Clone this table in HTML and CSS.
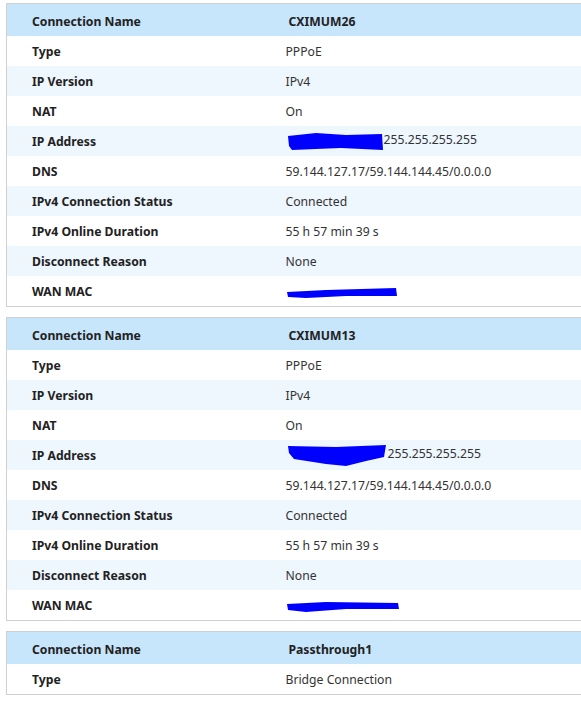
FILE: index.html
```html
<!DOCTYPE html>
<html>
<head>
<meta charset="utf-8">
<link rel="stylesheet" href="styles.css">
</head>
<body>
<div class="page">
  <table class="conn">
    <thead><tr><th class="lbl">Connection Name</th><th class="val">CXIMUM26</th></tr></thead>
    <tbody>
      <tr><td class="lbl">Type</td><td class="val">PPPoE</td></tr>
      <tr><td class="lbl">IP Version</td><td class="val">IPv4</td></tr>
      <tr><td class="lbl">NAT</td><td class="val">On</td></tr>
      <tr><td class="lbl">IP Address</td><td class="val"><svg class="redact" width="98" height="22" viewBox="0 0 98 22"><path d="M2 6 L30 3 L60 5 L96 4 L97 20 L55 18 L30 19 L6 20 L3 16 Z" fill="#0000ff"/></svg>255.255.255.255</td></tr>
      <tr><td class="lbl">DNS</td><td class="val">59.144.127.17/59.144.144.45/0.0.0.0</td></tr>
      <tr><td class="lbl">IPv4 Connection Status</td><td class="val">Connected</td></tr>
      <tr><td class="lbl">IPv4 Online Duration</td><td class="val">55 h 57 min 39 s</td></tr>
      <tr><td class="lbl">Disconnect Reason</td><td class="val">None</td></tr>
      <tr><td class="lbl">WAN MAC</td><td class="val"><svg class="redact" width="112" height="14" viewBox="0 0 112 14"><path d="M1 7 L40 5 L110 3 L111 11 L60 11 L20 13 L2 12 Z" fill="#0000ff"/></svg></td></tr>
    </tbody>
  </table>

  <table class="conn">
    <thead><tr><th class="lbl">Connection Name</th><th class="val">CXIMUM13</th></tr></thead>
    <tbody>
      <tr><td class="lbl">Type</td><td class="val">PPPoE</td></tr>
      <tr><td class="lbl">IP Version</td><td class="val">IPv4</td></tr>
      <tr><td class="lbl">NAT</td><td class="val">On</td></tr>
      <tr><td class="lbl">IP Address</td><td class="val"><svg class="redact" width="102" height="24" viewBox="0 0 102 24"><path d="M2 3 L50 4 L100 2 L98 14 L80 18 L60 23 L40 21 L8 16 L3 10 Z" fill="#0000ff"/></svg>255.255.255.255</td></tr>
      <tr><td class="lbl">DNS</td><td class="val">59.144.127.17/59.144.144.45/0.0.0.0</td></tr>
      <tr><td class="lbl">IPv4 Connection Status</td><td class="val">Connected</td></tr>
      <tr><td class="lbl">IPv4 Online Duration</td><td class="val">55 h 57 min 39 s</td></tr>
      <tr><td class="lbl">Disconnect Reason</td><td class="val">None</td></tr>
      <tr><td class="lbl">WAN MAC</td><td class="val"><svg class="redact" width="114" height="14" viewBox="0 0 114 14"><path d="M1 5 L40 3 L112 4 L113 10 L60 10 L20 13 L2 11 Z" fill="#0000ff"/></svg></td></tr>
    </tbody>
  </table>

  <table class="conn">
    <thead><tr><th class="lbl">Connection Name</th><th class="val">Passthrough1</th></tr></thead>
    <tbody>
      <tr><td class="lbl">Type</td><td class="val">Bridge Connection</td></tr>
    </tbody>
  </table>
</div>
</body>
</html>
```
FILE: styles.css
```css
html {
  overflow: hidden;
}
body {
  margin: 0;
  background: #ffffff;
  font-family: "Noto Sans", "Open Sans", sans-serif;
  font-size: 12.2px;
  color: #333333;
}
.page {
  padding: 3px 0 0 6px;
}
.conn {
  width: 575px;
  border-collapse: collapse;
  border: 1px solid #d0d0d0;
  border-right: 0;
  margin-bottom: 10px;
  table-layout: fixed;
}
.conn th,
.conn td {
  height: 30px;
  padding: 0;
  text-align: left;
  vertical-align: middle;
  white-space: nowrap;
}
.conn thead tr {
  background: #c7e5fb;
}
.conn th {
  height: 30px;
  padding-top: 2px;
  font-weight: bold;
  color: #222222;
}
.conn tbody tr:nth-child(even) {
  background: #eef6fe;
}
.conn .lbl {
  width: 279px;
  padding-left: 25px;
  box-sizing: border-box;
  font-weight: bold;
  color: #222222;
}
.conn th.val {
  padding-left: 3px;
}
.conn td.val {
  padding-left: 0;
}
.redact {
  display: inline-block;
  vertical-align: middle;
}
```
